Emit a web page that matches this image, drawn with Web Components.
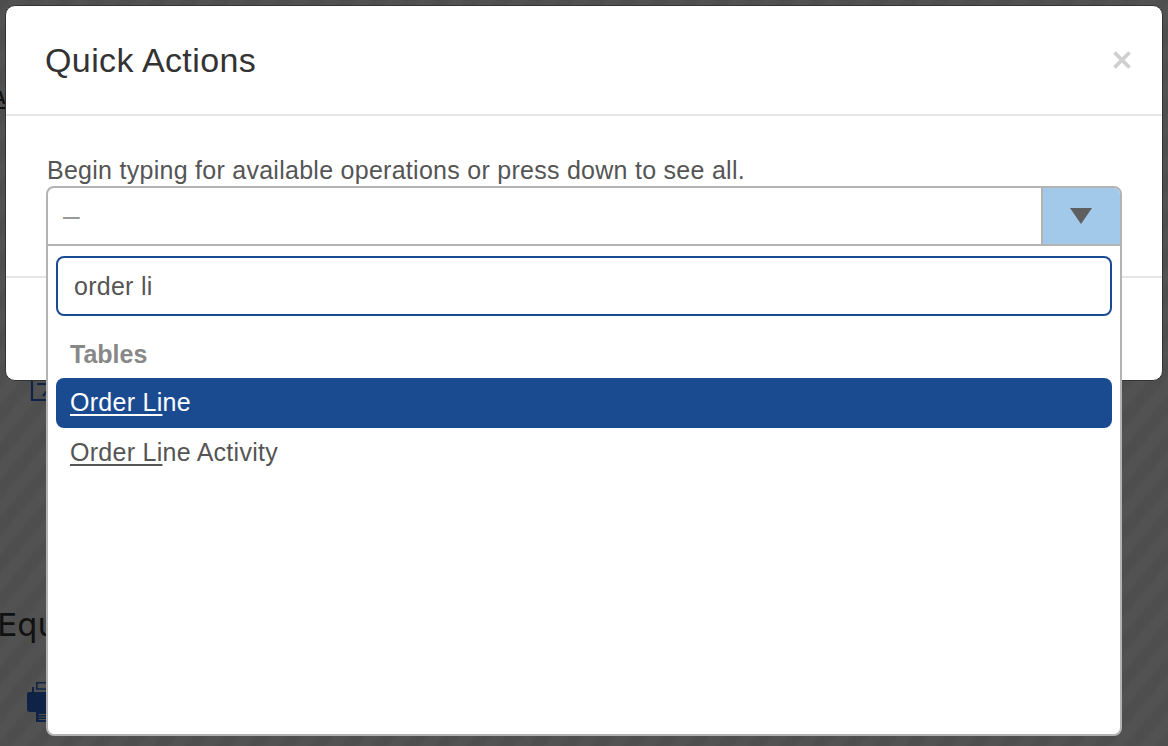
<!DOCTYPE html>
<html>
<head>
<meta charset="utf-8">
<title>Quick Actions</title>
<style>
    html, body {
        margin: 0;
        height: 100%;
    }
    body {
        width: 1168px;
        height: 746px;
        overflow: hidden;
        position: relative;
        font-family: "Liberation Sans", Arial, sans-serif;
    }
</style>
</head>
<body>
<page-backdrop></page-backdrop>
<quick-actions-modal heading="Quick Actions">
    <quick-select hint="Begin typing for available operations or press down to see all." value="order li">
        <option-group label="Tables">
            <option-row match="Order Li" rest="ne" active></option-row>
            <option-row match="Order Li" rest="ne Activity"></option-row>
        </option-group>
    </quick-select>
</quick-actions-modal>

<script>
class PageBackdrop extends HTMLElement {
    constructor() {
        super();
        this.attachShadow({mode: 'open'});
        this.shadowRoot.innerHTML = `
            <style>
                :host {
                    display: block;
                    width: 1168px;
                    height: 746px;
                    overflow: hidden;
                    background-color: #4f4f4f;
                    background-image: repeating-linear-gradient(-50deg, #4e4e4e 0, #4e4e4e 7px, #525252 12px, #525252 19px, #4e4e4e 24px);
                    color: #111;
                    box-sizing: border-box;
                    padding-top: 90px;
                }
                .crumb {
                    height: 286px;
                    margin-left: -7px;
                    font: bold 18px/17px "Liberation Sans", sans-serif;
                }
                .crumb span {
                    display: inline-block;
                    border-bottom: 2px solid #111;
                }
                .tile {
                    display: block;
                    margin-left: 30px;
                }
                h2 {
                    margin: 196px 0 0 -3px;
                    font: 32px/50px "DejaVu Sans", sans-serif;
                    color: #111;
                }
                .printer {
                    display: block;
                    margin: 30px 0 0 26px;
                }
            </style>
            <div class="crumb"><span>A</span></div>
            <svg class="tile" width="24" height="28" viewBox="0 0 24 28" fill="none" stroke="#0f2347" stroke-width="2.200">
                <path d="M2 0V24H24"/>
                <path d="M7 8H24"/>
                <path d="M13 20L18 14"/>
            </svg>
            <h2>Equ</h2>
            <svg class="printer" width="26" height="42" viewBox="0 0 26 42">
                <path d="M3 12H26V32H4C2 32 1 31 1 29V14C1 13 2 12 3 12Z" fill="#0f2347"/>
                <path d="M6 7H8V12H6Z" fill="#0f2347"/>
                <path d="M10.800 2.800H26V9H10.800Z" fill="none" stroke="#0f2347" stroke-width="1.600"/>
                <path d="M10 32H26V42H10Z" fill="#0f2347"/>
                <path d="M12.500 34.500H26M12.500 37H26M12.500 39.500H26" stroke="#4f4f4f" stroke-width="1.200"/>
            </svg>
        `;
    }
}

class QuickActionsModal extends HTMLElement {
    constructor() {
        super();
        this.attachShadow({mode: 'open'});
        this.shadowRoot.innerHTML = `
            <style>
                :host {
                    display: block;
                    position: absolute;
                    top: 5px;
                    left: 5px;
                    width: 1158px;
                    height: 376px;
                    box-sizing: border-box;
                    background: #fff;
                    border: 1px solid #333;
                    border-radius: 10px;
                }
                header {
                    display: flex;
                    align-items: center;
                    justify-content: space-between;
                    box-sizing: border-box;
                    height: 110px;
                    padding: 0 31px 0 39px;
                    border-bottom: 2px solid #e5e5e5;
                }
                h3 {
                    margin: 0;
                    font-size: 34px;
                    font-weight: normal;
                    letter-spacing: 0.4px;
                    color: #333;
                    line-height: 40px;
                }
                svg {
                    display: block;
                }
                .body {
                    padding: 40px 40px 0;
                }
                footer {
                    position: absolute;
                    left: 0;
                    right: 0;
                    top: 270px;
                    border-top: 2px solid #e5e5e5;
                }
            </style>
            <header>
                <h3></h3>
                <svg width="18" height="18" viewBox="0 0 18 18" stroke="#cfcfcf" stroke-width="3.800">
                    <path d="M1.500 1.500L16.500 16.500M16.500 1.500L1.500 16.500"/>
                </svg>
            </header>
            <div class="body"><slot></slot></div>
            <footer></footer>
        `;
        this.shadowRoot.querySelector('h3').textContent = this.getAttribute('heading');
    }
}

class QuickSelect extends HTMLElement {
    constructor() {
        super();
        this.attachShadow({mode: 'open'});
        this.shadowRoot.innerHTML = `
            <style>
                :host {
                    display: block;
                    position: relative;
                    z-index: 2;
                    color: #555;
                    font-size: 25px;
                    letter-spacing: 0.27px;
                }
                p {
                    margin: 0;
                    padding-left: 1px;
                    line-height: 28px;
                }
                .box {
                    width: 1076px;
                    height: 550px;
                    box-sizing: border-box;
                    margin-top: 2px;
                    background: #fff;
                    border: 2px solid #b3b3b3;
                    border-radius: 8px;
                    display: flex;
                    flex-direction: column;
                    overflow: hidden;
                }
                .current {
                    display: flex;
                    height: 58px;
                    flex: none;
                    box-sizing: border-box;
                    border-bottom: 2px solid #b3b3b3;
                }
                .value {
                    flex: 1;
                    padding-left: 15px;
                    font-size: 30px;
                    line-height: 56px;
                    color: #999;
                }
                .arrow {
                    width: 79px;
                    padding-right: 1px;
                    display: flex;
                    align-items: center;
                    justify-content: center;
                    background: #a3c9ea;
                    border-left: 2px solid #b3b3b3;
                    box-sizing: border-box;
                }
                .drop {
                    padding: 10px 8px 0;
                }
                input {
                    display: block;
                    width: 100%;
                    height: 60px;
                    box-sizing: border-box;
                    padding: 0 16px;
                    border: 2px solid #1a4b91;
                    border-radius: 8px;
                    outline: none;
                    font: 25px "Liberation Sans", Arial, sans-serif;
                    letter-spacing: 0.27px;
                    color: #555;
                    background: #fff;
                }
            </style>
            <p></p>
            <div class="box">
                <div class="current">
                    <div class="value">–</div>
                    <div class="arrow">
                        <svg width="22" height="16" viewBox="0 0 22 16"><path d="M0 0H22L11 16Z" fill="#5f5f5f"/></svg>
                    </div>
                </div>
                <div class="drop">
                    <input type="text">
                    <slot></slot>
                </div>
            </div>
        `;
        this.shadowRoot.querySelector('p').textContent = this.getAttribute('hint');
        this.shadowRoot.querySelector('input').value = this.getAttribute('value');
    }
}

class OptionGroup extends HTMLElement {
    constructor() {
        super();
        this.attachShadow({mode: 'open'});
        this.shadowRoot.innerHTML = `
            <style>
                :host {
                    display: block;
                }
                .label {
                    height: 62px;
                    box-sizing: border-box;
                    padding: 24px 0 0 14px;
                    line-height: 28px;
                    font-weight: bold;
                    letter-spacing: 0;
                    color: #888;
                }
            </style>
            <div class="label"></div>
            <slot></slot>
        `;
        this.shadowRoot.querySelector('.label').textContent = this.getAttribute('label');
    }
}

class OptionRow extends HTMLElement {
    constructor() {
        super();
        this.attachShadow({mode: 'open'});
        this.shadowRoot.innerHTML = `
            <style>
                :host {
                    display: block;
                    height: 50px;
                    box-sizing: border-box;
                    padding-left: 14px;
                    border-radius: 8px;
                    line-height: 48px;
                    color: #555;
                }
                :host([active]) {
                    background: #1a4b91;
                    color: #fff;
                }
                u {
                    text-decoration-thickness: 2px;
                    text-underline-offset: 3px;
                }
            </style>
            <u></u><span></span>
        `;
        this.shadowRoot.querySelector('u').textContent = this.getAttribute('match');
        this.shadowRoot.querySelector('span').textContent = this.getAttribute('rest');
    }
}

customElements.define('page-backdrop', PageBackdrop);
customElements.define('quick-actions-modal', QuickActionsModal);
customElements.define('quick-select', QuickSelect);
customElements.define('option-group', OptionGroup);
customElements.define('option-row', OptionRow);
</script>
</body>
</html>
